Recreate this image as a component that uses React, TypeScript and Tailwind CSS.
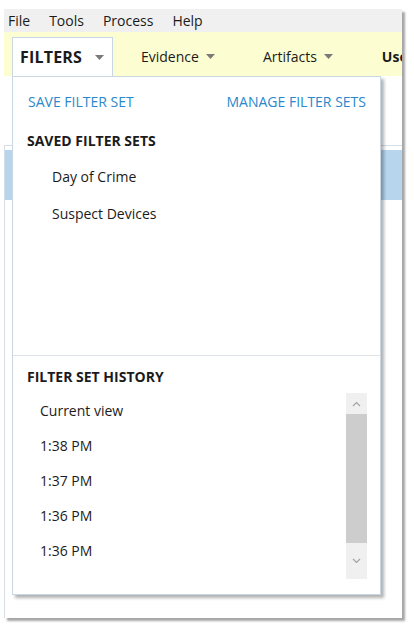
import React from 'react';

const Caret = ({ className = '' }: { className?: string }) => (
  <svg width="9" height="5" viewBox="0 0 9 5" className={className}>
    <path d="M0 0 H9 L4.5 5 Z" fill="#7a7a7a" />
  </svg>
);

const Chevron = ({ up }: { up?: boolean }) => (
  <svg width="9" height="6" viewBox="0 0 9 6">
    <path
      d={up ? 'M1 5 L4.5 1.5 L8 5' : 'M1 1 L4.5 4.5 L8 1'}
      fill="none"
      stroke="#a0a0a0"
      strokeWidth="1.1"
    />
  </svg>
);

const savedSets = ['Day of Crime', 'Suspect Devices'];
const history = ['Current view', '1:38 PM', '1:37 PM', '1:36 PM', '1:36 PM'];

const App = () => {
  return (
    <div
      className="w-[414px] h-[631px] bg-white pt-[9px] pl-[4px] overflow-hidden text-[#1b1b1b]"
      style={{ fontFamily: '"Open Sans", "Noto Sans", sans-serif' }}
    >
      {/* Window */}
      <div className="relative w-[398px] h-[609px] bg-white flex flex-col shadow-[3px_3px_2px_rgba(0,0,0,0.35)]">
        {/* Menu bar */}
        <div className="h-[23px] bg-[#f0f0f0] flex items-center pl-[4px] gap-[19px] text-[14px] leading-none">
          <span>File</span>
          <span>Tools</span>
          <span>Process</span>
          <span>Help</span>
        </div>

        {/* Toolbar */}
        <div className="h-[44px] bg-[#fdfdd2] flex items-end pl-[8px] overflow-hidden whitespace-nowrap">
          <div className="relative z-20 shrink-0 w-[101px] h-[40px] -mb-[1px] bg-white border border-b-0 border-[#c9d7e4] flex items-center pl-[7px] pb-[1px]">
            <span className="text-[16px] font-bold tracking-[0.2px]">FILTERS</span>
            <Caret className="ml-[13px]" />
          </div>
          <div className="shrink-0 h-[39px] flex items-center ml-[28px] text-[14px]">
            <span>Evidence</span>
            <Caret className="ml-[7px]" />
          </div>
          <div className="shrink-0 h-[39px] flex items-center ml-[48px] text-[14px]">
            <span>Artifacts</span>
            <Caret className="ml-[7px]" />
          </div>
          <div className="shrink-0 h-[39px] flex items-center ml-[49px] text-[14px] font-bold">
            <span>User</span>
          </div>
        </div>

        {/* Content behind dropdown */}
        <div className="flex-1 pt-[69px]">
          <div className="h-full border-t border-l border-[#d6dde4] pt-[4px]">
            <div className="h-[50px] bg-[#b7d6ee]" />
          </div>
        </div>

        {/* Filters dropdown */}
        <div className="absolute z-10 left-[8px] top-[67px] w-[369px] h-[519px] bg-white border border-[#c9d7e4] shadow-[3px_3px_3px_rgba(0,0,0,0.3)] flex flex-col">
          <div className="h-[279px] border-b border-[#dde3e8]">
            <div className="flex justify-between pl-[15px] pr-[14px] pt-[15px] leading-[20px] text-[14px] text-[#2a88cc]">
              <span>SAVE FILTER SET</span>
              <span>MANAGE FILTER SETS</span>
            </div>
            <div className="mt-[19px] pl-[14px] leading-[20px] text-[14px] font-bold">
              SAVED FILTER SETS
            </div>
            <div className="mt-[7px]">
              {savedSets.map((s, i) => (
                <div key={i} className="h-[37px] flex items-center pl-[39px] text-[14px]">
                  {s}
                </div>
              ))}
            </div>
          </div>
          <div className="flex-1 flex flex-col">
            <div className="pt-[11px] pl-[14px] leading-[20px] text-[14px] font-bold">
              FILTER SET HISTORY
            </div>
            <div className="flex mt-[6px]">
              <div className="flex-1">
                {history.map((h, i) => (
                  <div key={i} className="h-[35px] flex items-center pl-[27px] text-[14px]">
                    {h}
                  </div>
                ))}
              </div>
              <div className="w-[21px] h-[186px] mr-[13px] bg-[#f0f0f0] flex flex-col">
                <div className="h-[21px] flex items-center justify-center">
                  <Chevron up />
                </div>
                <div className="h-[129px] bg-[#cdcdcd]" />
                <div className="flex-1 flex items-center justify-center">
                  <Chevron />
                </div>
              </div>
            </div>
          </div>
        </div>
      </div>
    </div>
  );
};

export default App;
